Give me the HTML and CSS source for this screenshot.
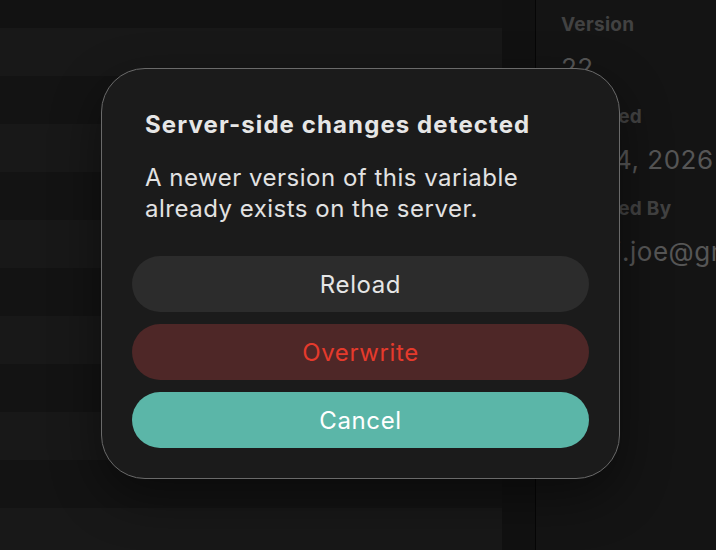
FILE: index.html
```html
<!DOCTYPE html>
<html lang="en">
<head>
<meta charset="utf-8">
<title>Server-side changes detected</title>
<link rel="stylesheet" href="styles.css">
</head>
<body>
<div class="app">
  <div class="main">
    <div class="list">
      <div class="row row-top"></div>
      <div class="row light"></div>
      <div class="row"></div>
      <div class="row light"></div>
      <div class="row"></div>
      <div class="row light"></div>
      <div class="row"></div>
      <div class="row light"></div>
      <div class="row"></div>
      <div class="row light"></div>
      <div class="row"></div>
      <div class="row light"></div>
    </div>
  </div>
  <div class="divider"></div>
  <aside class="side">
    <div class="field">
      <div class="label">Version</div>
      <div class="value">22</div>
    </div>
    <div class="field">
      <div class="label">Updated</div>
      <div class="value">Jan 4, 2026</div>
    </div>
    <div class="field">
      <div class="label">Updated By</div>
      <div class="value">mani.joe@gmail.com</div>
    </div>
  </aside>
</div>

<div class="overlay">
  <div class="dialog" role="alertdialog">
    <h2 class="title">Server-side changes detected</h2>
    <p class="message">A newer version of this variable<br>already exists on the server.</p>
    <div class="actions">
      <button class="btn btn-reload">Reload</button>
      <button class="btn btn-overwrite">Overwrite</button>
      <button class="btn btn-cancel">Cancel</button>
    </div>
  </div>
</div>
</body>
</html>
```

FILE: styles.css
```css
* { box-sizing: border-box; }

html, body {
  margin: 0;
  padding: 0;
  width: 716px;
  height: 550px;
  overflow: hidden;
  background: #141414;
  font-family: Inter, "Noto Sans", sans-serif;
}

.app {
  display: flex;
  height: 550px;
}

.main {
  width: 535px;
  background: #131313;
}

.list {
  width: 502px;
  display: flex;
  flex-direction: column;
}

.row {
  height: 48px;
  background: #151515;
}

.row-top {
  height: 28px;
  background: #141414;
}

.row.light {
  background: #1a1a1a;
}

.divider {
  width: 1px;
  background: #070707;
}

.side {
  flex: 1;
  background: #161616;
  padding: 14px 0 0 25px;
  display: flex;
  flex-direction: column;
  gap: 22px;
  white-space: nowrap;
  overflow: hidden;
}

.field {
  display: flex;
  flex-direction: column;
  gap: 16px;
}

.label {
  font-size: 19px;
  line-height: 22px;
  font-weight: 700;
  letter-spacing: 0.3px;
  color: #474747;
}

.value {
  font-size: 26px;
  line-height: 32px;
  letter-spacing: 0.5px;
  color: #5c5c5c;
}

.overlay {
  position: absolute;
  inset: 0;
  background: rgba(0, 0, 0, 0.06);
  padding: 68px 0 0 101px;
}

.dialog {
  width: 519px;
  border: 1px solid #6a6a6a;
  border-radius: 44px;
  background: #1b1b1b;
  padding: 41px 30px 30px;
  box-shadow: 0 18px 50px rgba(0, 0, 0, 0.45);
}

.title {
  margin: 0;
  padding: 0 13px;
  font-size: 24px;
  line-height: 30px;
  font-weight: 700;
  letter-spacing: 1.1px;
  color: #e6e6e6;
  white-space: nowrap;
}

.message {
  margin: 22px 0 0;
  padding: 0 13px;
  font-size: 24px;
  line-height: 31px;
  letter-spacing: 0.5px;
  color: #e2e2e2;
}

.actions {
  margin-top: 32px;
  display: flex;
  flex-direction: column;
  gap: 12px;
}

.btn {
  height: 56px;
  border: none;
  border-radius: 28px;
  font-family: inherit;
  font-size: 24px;
  letter-spacing: 0.6px;
  display: flex;
  align-items: center;
  justify-content: center;
  padding: 0;
}

.btn-reload {
  background: #2c2c2c;
  color: #e6e6e6;
}

.btn-overwrite {
  background: #4e2727;
  color: #e53a2c;
}

.btn-cancel {
  background: #5bb6a8;
  color: #ffffff;
}
```
